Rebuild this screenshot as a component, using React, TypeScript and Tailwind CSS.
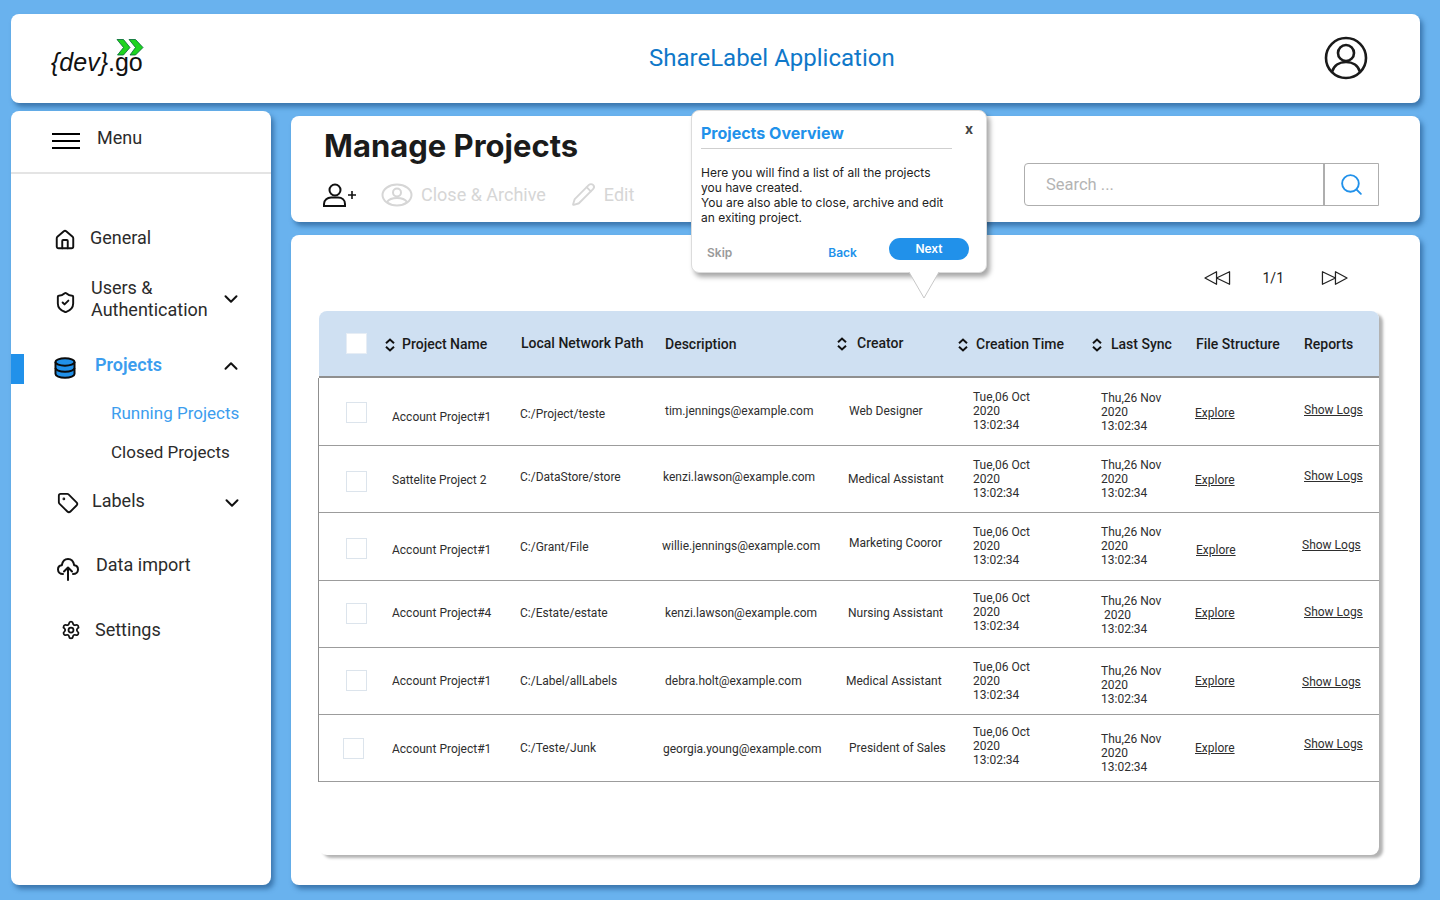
import React from 'react';
import { ChevronDown, ChevronUp, House, Pencil, Search, Settings, ShieldCheck, Tag } from 'lucide-react';

const cardClass = 'rounded-lg bg-white shadow-[3px_4px_5px_rgba(20,70,120,0.55)]';

const SortIcon = ({ className = '' }: { className?: string }) => (
  <svg viewBox="0 0 12 14" className={`h-[14px] w-[12px] shrink-0 ${className}`} fill="none" stroke="#111" strokeWidth="2">
    <path d="M2 5.200 6 1.600l4 3.600M2 8.800l4 3.600 4-3.600" />
  </svg>
);

const Logo = () => (
  <div className="relative h-[40px] w-[96px] font-['Liberation_Sans',sans-serif] text-[25px] leading-none text-[#111]">
    <svg viewBox="0 0 28 17" className="absolute left-[65px] top-[0px] h-[17px] w-[28px]" fill="#1fd41f" stroke="#063" strokeWidth="0.8">
      <path d="M1 .5h6.500L14 8.500 7.500 16H1.500L7.500 8.500Z" />
      <path d="M13 .5h6.500L27 8.500 19.500 16H14L19.500 8.500Z" />
    </svg>
    <div className="absolute left-0 top-[11px] whitespace-nowrap">
      <span className="italic">{'{dev}'}</span>.go
    </div>
  </div>
);

const DatabaseIcon = () => (
  <svg viewBox="0 0 22 22" className="h-[22px] w-[22px]" fill="#2191ea" stroke="#0b0b0b" strokeWidth="2">
    <path d="M1.500 5v12c0 2 4 3.700 9.500 3.700s9.500-1.700 9.500-3.700V5" />
    <ellipse cx="11" cy="5" rx="9.500" ry="3.700" />
    <path d="M1.500 11c0 2 4 3.700 9.500 3.700s9.500-1.700 9.500-3.700" fill="none" />
  </svg>
);

const CloudArrowIcon = () => (
  <svg viewBox="0 0 22 24" className="h-[24px] w-[22px]" fill="none" stroke="#111" strokeWidth="2" strokeLinecap="round" strokeLinejoin="round">
    <path d="M6 17C3 17 1 15 1 12.500c0-2.300 1.700-4 3.800-4.200C5.500 4.500 8 2 11 2s5.500 2.500 6.200 6.300C19.300 8.500 21 10.200 21 12.500 21 15 19 17 16 17" />
    <path d="M11 23V11M7 14.500 11 10.500l4 4" />
  </svg>
);

const UserPlusIcon = () => (
  <svg viewBox="0 0 34 24" className="h-[24px] w-[34px]" fill="none" stroke="#111" strokeWidth="2">
    <circle cx="12" cy="7" r="5.500" />
    <path d="M1 23v-2c0-4 3.500-6.500 7-6.500h7c4 0 7 2.500 7 6.500v2Z" />
    <path d="M25 12h8M29 8v8" strokeWidth="1.600" />
  </svg>
);

const GhostUserIcon = () => (
  <svg viewBox="0 0 32 24" className="h-[24px] w-[32px]" fill="none" stroke="#d6d6d6" strokeWidth="2">
    <ellipse cx="16" cy="12" rx="14.500" ry="10.500" />
    <circle cx="16" cy="9.500" r="4" />
    <path d="M6 19c2-3 6-4 10-4s8 1 10 4" />
  </svg>
);

const RewindIcon = ({ flip = false }: { flip?: boolean }) => (
  <svg viewBox="0 0 28 16" className={`h-[16px] w-[27px] ${flip ? '-scale-x-100' : ''}`} fill="none" stroke="#222" strokeWidth="1.300" strokeLinejoin="round">
    <path d="M1 8 13 1.500v13ZM13 8 26.500 1.500v13Z" />
  </svg>
);

type NavItemProps = {
  icon: React.ReactNode;
  label: React.ReactNode;
  className: string;
  iconClass: string;
  labelClass: string;
  chevron?: 'up' | 'down';
  chevronClass?: string;
  active?: boolean;
};

const NavItem = ({ icon, label, className, iconClass, labelClass, chevron, chevronClass = '', active }: NavItemProps) => (
  <div className={`flex items-center ${className}`}>
    <div className={`flex h-[22px] w-[24px] shrink-0 items-center justify-center ${iconClass}`}>{icon}</div>
    <div className={`flex-1 text-[18px] leading-[22px] ${active ? 'font-semibold text-[#3c9dee]' : 'text-[#2b2b2b]'} ${labelClass}`}>{label}</div>
    {chevron === 'down' && <ChevronDown size={22} strokeWidth={2.2} className={`text-[#111] ${chevronClass}`} />}
    {chevron === 'up' && <ChevronUp size={22} strokeWidth={2.2} className={`text-[#111] ${chevronClass}`} />}
  </div>
);

const Sidebar = () => (
  <aside className={`relative h-[774px] w-[260px] shrink-0 font-['Roboto',sans-serif] ${cardClass}`}>
    <div className="flex h-[63px] items-start gap-[17px] border-b-2 border-[#e4e4e4] pl-[41px] pt-[16px]">
      <div className="mt-[6px] flex w-[28px] flex-col gap-[5px]">
        <span className="h-[2px] bg-black" />
        <span className="h-[2px] bg-black" />
        <span className="h-[2px] bg-black" />
      </div>
      <span className="text-[18px] leading-[22px] text-[#2b2b2b]">Menu</span>
    </div>
    <nav className="flex flex-col">
      <NavItem className="mt-[53px] pl-[42px]" iconClass="translate-y-[2px]" labelClass="ml-[13px]" icon={<House size={22} strokeWidth={2.1} className="text-[#111]" />} label="General" />
      <NavItem
        className="mt-[28px] pl-[43px] pr-[29px]"
        iconClass="-ml-px translate-y-[3px]"
        labelClass="ml-[14px]"
        icon={<ShieldCheck size={23} strokeWidth={2} className="text-[#111]" />}
        label={<>Users &<br />Authentication</>}
        chevron="down"
      />
      <div className="relative mt-[33px]">
        <span className="absolute left-0 top-0 h-[30px] w-[13px] bg-[#2191ea]" />
        <NavItem className="pl-[42px] pr-[29px]" iconClass="translate-y-[3px]" labelClass="ml-[18px]" icon={<DatabaseIcon />} label="Projects" chevron="up" chevronClass="translate-y-[1px]" active />
      </div>
      <div className="mt-[26px] pl-[100px] text-[17px] leading-[22px] text-[#3c9dee]">Running Projects</div>
      <div className="mt-[17px] pl-[100px] text-[17px] leading-[22px] text-[#2b2b2b]">Closed Projects</div>
      <NavItem className="mt-[27px] pl-[45px] pr-[28px]" iconClass="translate-y-[2px]" labelClass="ml-[12px]" icon={<Tag size={22} strokeWidth={2} className="text-[#111]" />} label="Labels" chevron="down" chevronClass="translate-y-[2px]" />
      <NavItem className="mt-[42px] pl-[45px]" iconClass="translate-y-[4px]" labelClass="ml-[16px]" icon={<CloudArrowIcon />} label="Data import" />
      <NavItem className="mt-[43px] pl-[48px]" iconClass="" labelClass="ml-[12px]" icon={<Settings size={20} strokeWidth={2.1} className="text-[#111]" />} label="Settings" />
    </nav>
  </aside>
);

const Toolbar = () => (
  <section className={`flex h-[106px] justify-between pl-[32px] pr-[41px] ${cardClass}`}>
    <div>
      <h1 className="mt-[12px] ml-px font-['Inter',sans-serif] text-[31px] font-bold leading-[36px] text-[#1b1b1b]">Manage Projects</h1>
      <div className="mt-[18px] flex items-center font-['Roboto',sans-serif] text-[18px] leading-[22px] text-[#d6d6d6]">
        <UserPlusIcon />
        <span className="ml-[24px]"><GhostUserIcon /></span>
        <span className="ml-[8px]">Close &amp; Archive</span>
        <Pencil size={25} strokeWidth={1.8} className="ml-[25px]" />
        <span className="ml-[8px]">Edit</span>
      </div>
    </div>
    <div className="mt-[47px] flex h-[43px] w-[355px] rounded-l-[4px] border border-[#aeaeae] font-['Roboto',sans-serif]">
      <div className="flex flex-1 items-center border-r-2 border-[#aeaeae] pl-[21px] pt-[1px] text-[16.5px] text-[#b4b4b4]">Search ...</div>
      <div className="flex w-[53px] items-center justify-center">
        <Search size={25} strokeWidth={1.8} className="text-[#2191ea]" />
      </div>
    </div>
  </section>
);

const gridClass = 'grid grid-cols-[73px_128px_145px_184px_124px_128px_94px_109px_1fr]';

type Cell = { text: React.ReactNode; cls: string };
type Row = {
  rowCls: string;
  box: string;
  name: Cell;
  path: Cell;
  desc: Cell;
  creator: Cell;
  time: Cell;
  sync: Cell;
  explore: Cell;
  logs: Cell;
};

const tue = <>Tue,06 Oct<br />2020<br />13:02:34</>;
const thu = <>Thu,26 Nov<br />2020<br />13:02:34</>;

const rows: Row[] = [
  {
    rowCls: 'h-[68px] pb-[1px]',
    box: 'ml-[27px] mb-[-2px]',
    name: { text: 'Account Project#1', cls: 'mt-[11px]' },
    path: { text: 'C:/Project/teste', cls: 'mt-[5px]' },
    desc: { text: 'tim.jennings@example.com', cls: '' },
    creator: { text: 'Web Designer', cls: '' },
    time: { text: tue, cls: '' },
    sync: { text: thu, cls: 'mt-[2px]' },
    explore: { text: 'Explore', cls: 'mt-[3px]' },
    logs: { text: 'Show Logs', cls: 'mb-[3px]' },
  },
  {
    rowCls: 'h-[67px]',
    box: 'ml-[27px] mt-[4px]',
    name: { text: 'Sattelite Project 2', cls: 'mt-[2px]' },
    path: { text: 'C:/DataStore/store', cls: 'mb-[4px]' },
    desc: { text: 'kenzi.lawson@example.com', cls: 'ml-[-2px] mb-[4px]' },
    creator: { text: 'Medical Assistant', cls: 'ml-[-1px]' },
    time: { text: tue, cls: '' },
    sync: { text: thu, cls: '' },
    explore: { text: 'Explore', cls: 'mt-[2px]' },
    logs: { text: 'Show Logs', cls: 'mb-[6px]' },
  },
  {
    rowCls: 'h-[68px] pb-[2px]',
    box: 'ml-[27px] mt-[6px]',
    name: { text: 'Account Project#1', cls: 'mt-[8px]' },
    path: { text: 'C:/Grant/File', cls: 'mt-[2px]' },
    desc: { text: 'willie.jennings@example.com', cls: 'ml-[-3px]' },
    creator: { text: 'Marketing Cooror', cls: 'mb-[6px]' },
    time: { text: tue, cls: '' },
    sync: { text: thu, cls: '' },
    explore: { text: 'Explore', cls: 'ml-px mt-[8px]' },
    logs: { text: 'Show Logs', cls: 'ml-[-2px] mb-[2px]' },
  },
  {
    rowCls: 'h-[67px] pb-[2px]',
    box: 'ml-[27px] mb-[-1px]',
    name: { text: 'Account Project#4', cls: 'mt-[-1px]' },
    path: { text: 'C:/Estate/estate', cls: '' },
    desc: { text: 'kenzi.lawson@example.com', cls: '' },
    creator: { text: 'Nursing Assistant', cls: 'ml-[-1px]' },
    time: { text: tue, cls: 'mb-[2px]' },
    sync: { text: <>Thu,26 Nov<br />&nbsp;2020<br />13:02:34</>, cls: 'mt-[4px]' },
    explore: { text: 'Explore', cls: '' },
    logs: { text: 'Show Logs', cls: 'mb-[3px]' },
  },
  {
    rowCls: 'h-[67px]',
    box: 'ml-[27px] mb-[2px]',
    name: { text: 'Account Project#1', cls: 'mb-[1px]' },
    path: { text: 'C:/Label/allLabels', cls: '' },
    desc: { text: 'debra.holt@example.com', cls: '' },
    creator: { text: 'Medical Assistant', cls: 'ml-[-3px]' },
    time: { text: tue, cls: '' },
    sync: { text: thu, cls: 'mt-[8px]' },
    explore: { text: 'Explore', cls: '' },
    logs: { text: 'Show Logs', cls: 'ml-[-2px] mt-[2px]' },
  },
  {
    rowCls: 'h-[67px]',
    box: 'ml-[24px] mt-[1px]',
    name: { text: 'Account Project#1', cls: 'mt-[2px]' },
    path: { text: 'C:/Teste/Junk', cls: '' },
    desc: { text: 'georgia.young@example.com', cls: 'ml-[-2px] mt-[2px]' },
    creator: { text: 'President of Sales', cls: '' },
    time: { text: tue, cls: 'mb-[4px]' },
    sync: { text: thu, cls: 'mt-[10px]' },
    explore: { text: 'Explore', cls: '' },
    logs: { text: 'Show Logs', cls: 'mb-[8px]' },
  },
];

const Check = ({ className = '', header = false }: { className?: string; header?: boolean }) => (
  <div className={`h-[21px] w-[21px] border bg-white ${header ? 'border-[#e6edf5]' : 'border-[#dce4ec]'} ${className}`} />
);

const ProjectTable = () => (
  <div className="ml-[28px] h-[544px] w-[1060px] rounded-lg bg-white font-['Roboto',sans-serif] shadow-[4px_3px_3px_rgba(0,0,0,0.3)]">
    <div className={`${gridClass} h-[67px] items-center rounded-t-lg border-b-2 border-[#8f8f8f] bg-[#cfe0f2] pt-[2px] text-[14px] font-medium text-[#1b1b1b]`}>
      <Check header className="ml-[27px] mt-[-3px]" />
      <div className="ml-[-8px] flex items-center gap-[6px]"><SortIcon />Project Name</div>
      <div className="ml-px mb-[2px]">Local Network Path</div>
      <div>Description</div>
      <div className="ml-[-13px] mb-[2px] flex items-center gap-[9px]"><SortIcon />Creator</div>
      <div className="ml-[-16px] flex items-center gap-[7px] whitespace-nowrap"><SortIcon />Creation Time</div>
      <div className="ml-[-10px] flex items-center gap-[8px]"><SortIcon />Last Sync</div>
      <div className="ml-px whitespace-nowrap">File Structure</div>
      <div>Reports</div>
    </div>
    <div className="ml-[-1px] border-l border-[#8f8f8f]">
      {rows.map((row, i) => (
        <div key={i} className={`${gridClass} items-center border-b-[1.5px] border-[#9c9c9c] text-[12px] leading-[14px] text-[#2e2e2e] ${row.rowCls}`}>
          <Check className={row.box} />
          <div className={row.name.cls}>{row.name.text}</div>
          <div className={row.path.cls}>{row.path.text}</div>
          <div className={`whitespace-nowrap ${row.desc.cls}`}>{row.desc.text}</div>
          <div className={`whitespace-nowrap ${row.creator.cls}`}>{row.creator.text}</div>
          <div className={row.time.cls}>{row.time.text}</div>
          <div className={row.sync.cls}>{row.sync.text}</div>
          <div className={`underline ${row.explore.cls}`}>{row.explore.text}</div>
          <div className={`whitespace-nowrap underline ${row.logs.cls}`}>{row.logs.text}</div>
        </div>
      ))}
    </div>
  </div>
);

const Popover = () => (
  <div className="absolute left-[691px] top-[110px] h-[163px] w-[296px] rounded-lg border border-[#dcdcdc] bg-white font-['Inter',sans-serif] shadow-[3px_4px_5px_rgba(0,0,0,0.35)]">
    <div className="ml-[9px] w-[251px] border-b border-[#cfcfcf] pb-[4px] pt-[11px] text-[16px] font-bold leading-[22px] text-[#2191ea]">Projects Overview</div>
    <span className="absolute right-[13px] top-[9px] text-[14px] font-bold leading-[18px] text-[#444]">x</span>
    <p className="ml-[9px] mt-[16px] w-[270px] text-[12px] leading-[15px] text-[#222]">
      Here you will find a list of all the projects
      <br />
      you have created.
      <br />
      You are also able to close, archive and edit
      <br />
      an exiting project.
    </p>
    <div className="mt-[13px] flex pl-[15px] pr-[17px] text-[12px] font-semibold">
      <span className="mt-[6px] text-[#9a9a9a]">Skip</span>
      <span className="ml-[96px] mt-[6px] text-[#2191ea]">Back</span>
      <span className="ml-auto flex h-[22px] w-[80px] items-center justify-center rounded-full bg-[#2191ea] text-white">Next</span>
    </div>
    <svg viewBox="0 0 32 28" className="absolute left-[216px] top-[161px] h-[28px] w-[32px]" fill="#fff" stroke="#c8c8c8">
      <path d="M1 0 16 26 31 0" />
    </svg>
  </div>
);

export default function App() {
  return (
    <div className="relative h-[900px] w-[1440px] overflow-hidden bg-[#69b2ee] px-[11px] pt-[14px]">
      <header className={`flex h-[89px] w-[1409px] items-center ${cardClass}`}>
        <div className="ml-[40px] w-[598px]"><Logo /></div>
        <div className="mb-[2px] w-[460px] font-['Roboto',sans-serif] text-[24px] text-[#0f78c9]">ShareLabel Application</div>
        <svg viewBox="0 0 44 44" className="mb-[2px] ml-[215px] h-[44px] w-[44px]" fill="none" stroke="#1a1a1a" strokeWidth="2.6">
          <circle cx="22" cy="22" r="20" />
          <circle cx="22" cy="17" r="8" />
          <path d="M8 36c2-7 8-10 14-10s12 3 14 10" />
        </svg>
      </header>
      <div className="mt-[8px] flex gap-[20px]">
        <Sidebar />
        <div className="mt-[5px] flex w-[1129px] flex-col gap-[13px]">
          <Toolbar />
          <main className={`h-[650px] ${cardClass}`}>
            <div className="flex h-[76px] items-center justify-end pr-[72px] pt-[10px] font-['Roboto',sans-serif] text-[14px] text-[#222]">
              <RewindIcon />
              <span className="ml-[31px] mr-[37px]">1/1</span>
              <RewindIcon flip />
            </div>
            <ProjectTable />
          </main>
        </div>
      </div>
      <Popover />
    </div>
  );
}
